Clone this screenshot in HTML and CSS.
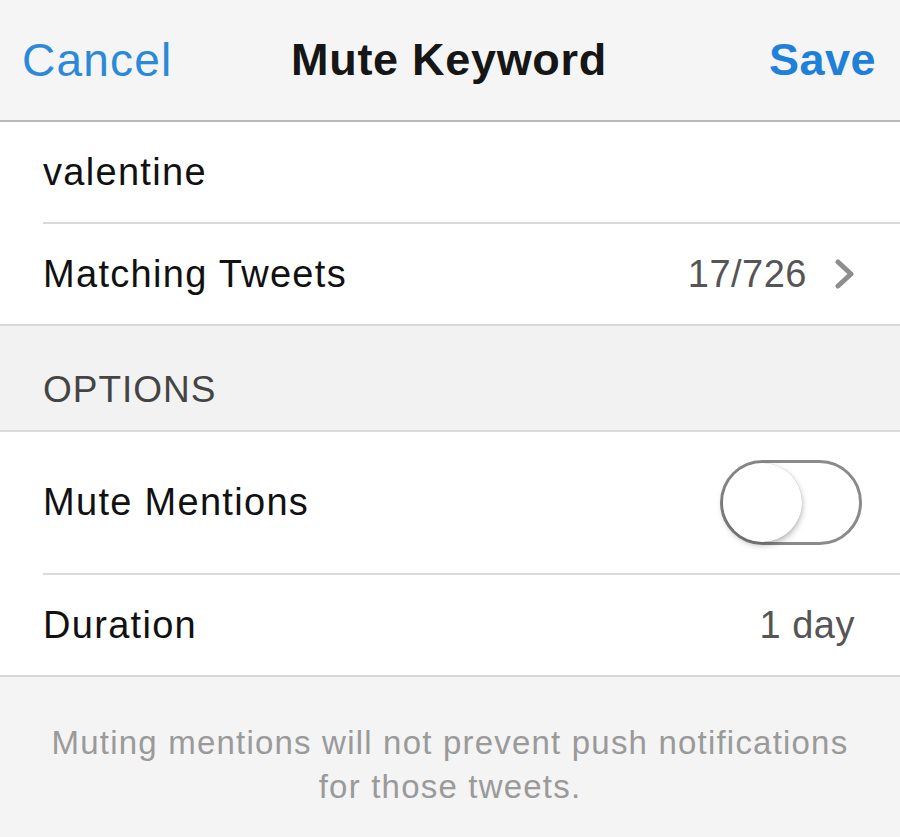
FILE: index.html
```html
<!DOCTYPE html>
<html lang="en">
<head>
    <meta charset="UTF-8">
    <meta name="viewport" content="width=device-width, initial-scale=1.0">
    <title>Mute Keyword</title>
    <link rel="stylesheet" href="styles.css">
</head>
<body>
    <header class="navbar">
        <span class="nav-btn cancel">Cancel</span>
        <h1 class="nav-title">Mute Keyword</h1>
        <span class="nav-btn save">Save</span>
    </header>

    <div class="group">
        <div class="cell inset">
            <span class="label">valentine</span>
        </div>
        <div class="cell">
            <span class="label">Matching Tweets</span>
            <span class="value">17/726</span>
            <svg class="chevron" viewBox="0 0 24 30" width="24" height="30">
                <path d="M5 3 L18 15 L5 27" fill="none" stroke="#8e8e8e" stroke-width="5" stroke-linecap="round" stroke-linejoin="round"/>
            </svg>
        </div>
    </div>

    <div class="section-header">OPTIONS</div>

    <div class="group">
        <div class="cell tall inset">
            <span class="label">Mute Mentions</span>
            <div class="switch"><div class="knob"></div></div>
        </div>
        <div class="cell">
            <span class="label">Duration</span>
            <span class="value plain">1 day</span>
        </div>
    </div>

    <p class="footer-note">Muting mentions will not prevent push notifications<br>for those tweets.</p>
</body>
</html>
```

FILE: styles.css
```css
body {
    margin: 0;
    background: #f4f4f4;
    font-family: 'Liberation Sans', Arial, sans-serif;
    color: #111;
}

.navbar {
    display: grid;
    grid-template-columns: 1fr auto 1fr;
    align-items: center;
    height: 120px;
    padding: 0 24px 0 22px;
    background: #f5f5f5;
    border-bottom: 2px solid #b9b9b9;
}

.nav-btn {
    font-size: 45px;
    color: #2b8ad8;
}

.cancel {
    justify-self: start;
    font-size: 46px;
    letter-spacing: 1.2px;
}

.save {
    justify-self: end;
    font-weight: bold;
    color: #1f80d9;
    letter-spacing: 0.5px;
}

.nav-title {
    margin: 0;
    font-size: 45px;
    font-weight: bold;
    color: #161616;
    letter-spacing: 0.7px;
}

.group {
    background: #fff;
    border-bottom: 2px solid #d7d7d7;
}

.cell {
    display: flex;
    align-items: center;
    height: 100px;
    margin-left: 43px;
    padding-right: 45px;
    font-size: 38px;
}

.cell.inset {
    border-bottom: 2px solid #dadada;
}

.cell.tall {
    height: 141px;
    padding-right: 38px;
}

.label {
    flex: 1;
    letter-spacing: 1.3px;
}

.value {
    color: #555;
    letter-spacing: 0.5px;
}

.chevron {
    margin-left: 26px;
    margin-right: -2px;
}

.section-header {
    display: flex;
    align-items: flex-end;
    height: 106px;
    box-sizing: border-box;
    padding: 0 0 19px 43px;
    background: #f2f2f2;
    border-bottom: 2px solid #dadada;
    font-size: 37px;
    color: #444;
    letter-spacing: 1px;
}

.switch {
    position: relative;
    width: 136px;
    height: 79px;
    border: 3px solid #8a8a8a;
    border-radius: 43px;
    background: #fff;
}

.knob {
    position: absolute;
    top: 0;
    left: 0;
    width: 79px;
    height: 79px;
    border-radius: 50%;
    background: #fff;
    box-shadow: 0 3px 6px rgba(0, 0, 0, 0.3), 0 0 1px rgba(0, 0, 0, 0.25);
}

.footer-note {
    margin: 0;
    padding: 44px 20px 0;
    text-align: center;
    font-size: 33px;
    line-height: 44px;
    letter-spacing: 1.2px;
    color: #9a9a9a;
}
```
